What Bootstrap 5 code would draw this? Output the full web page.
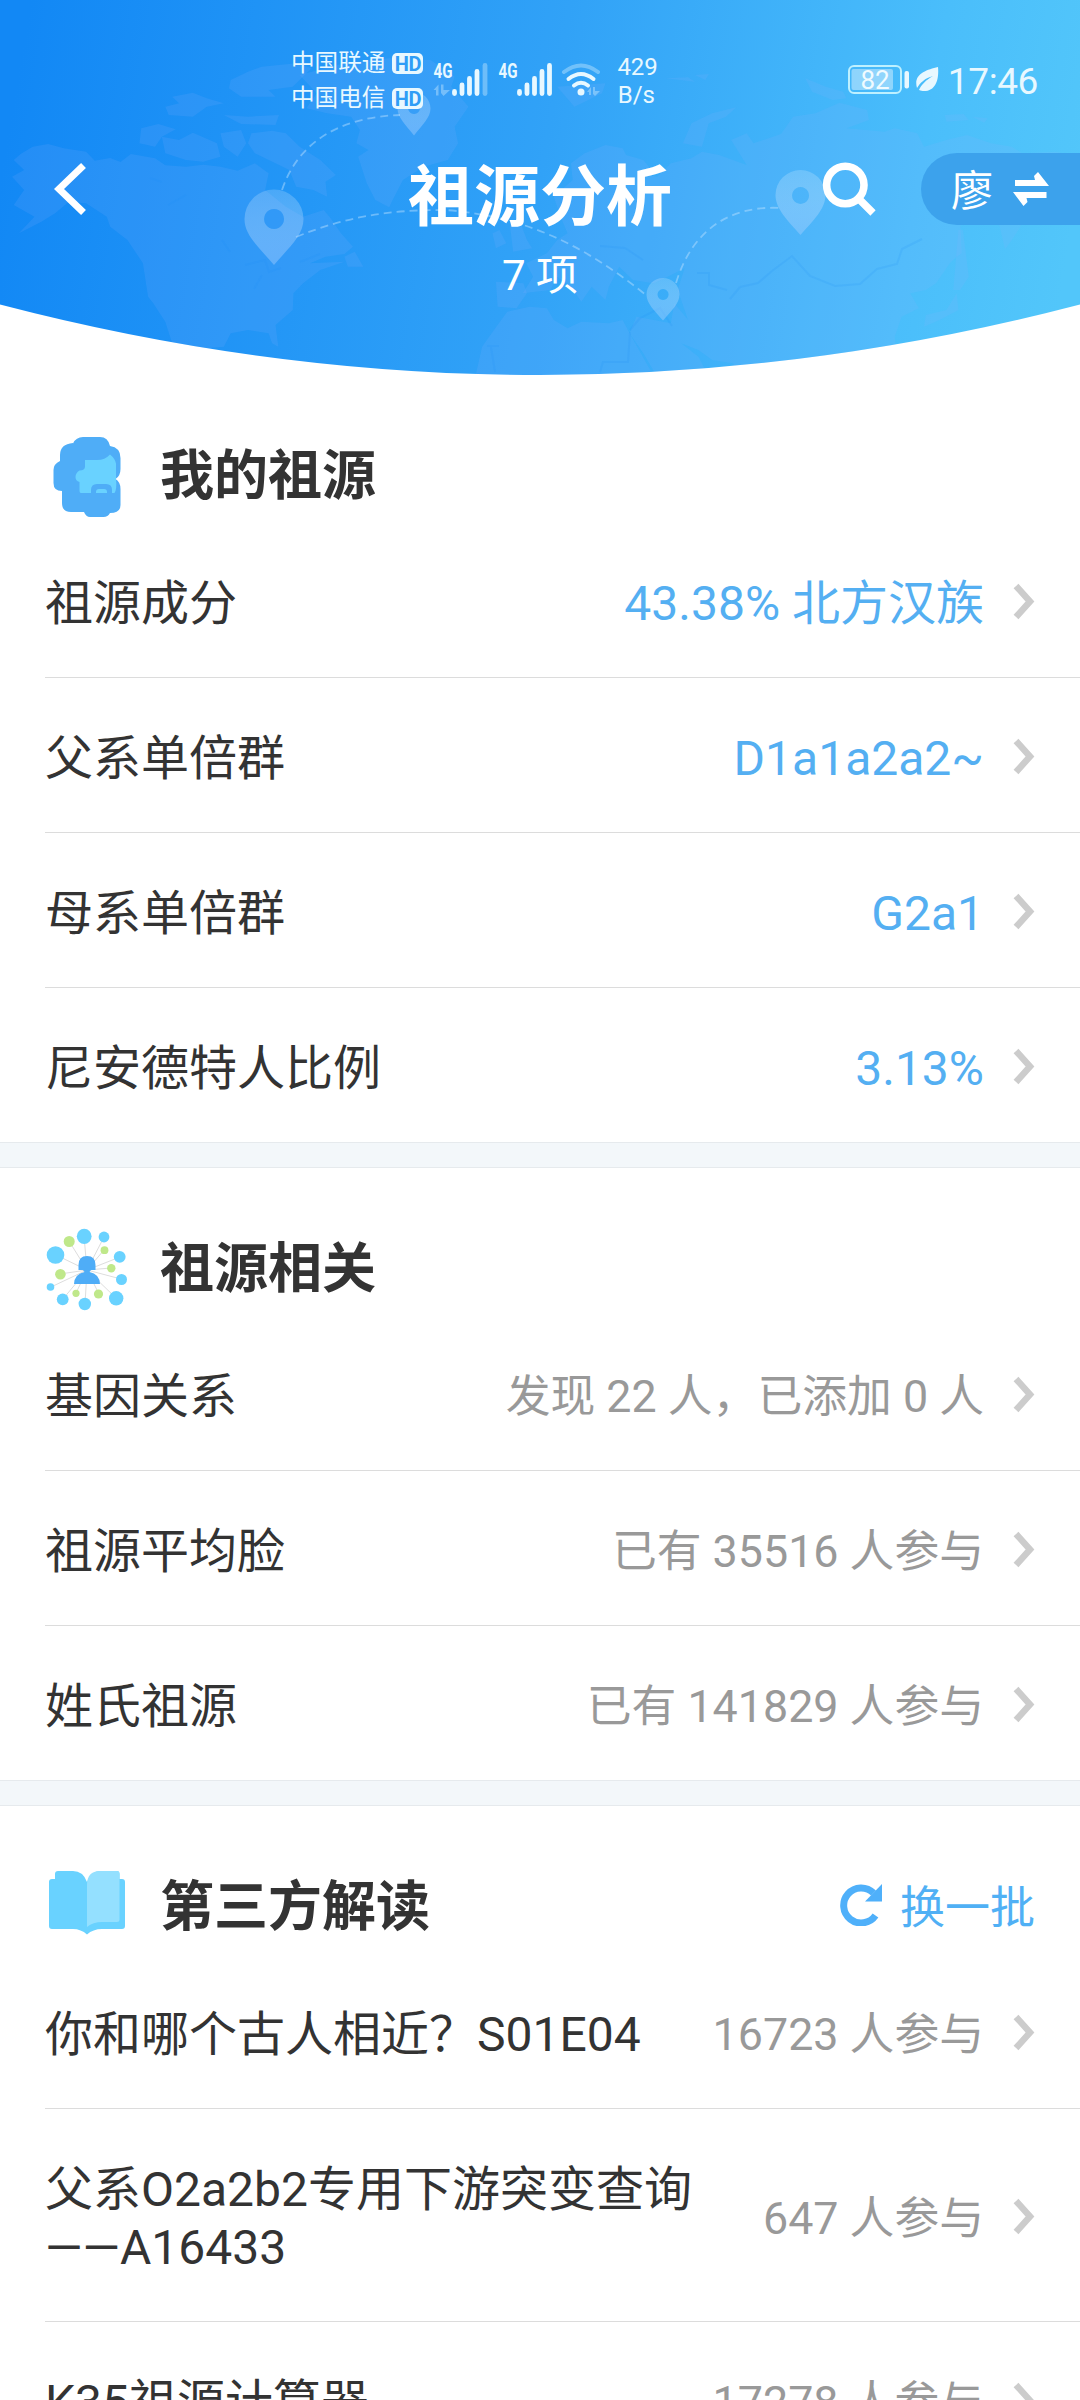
<!DOCTYPE html>
<html lang="zh-CN">
<head>
<meta charset="utf-8">
<meta name="viewport" content="width=device-width, initial-scale=1">
<title>祖源分析</title>
<link href="https://cdn.jsdelivr.net/npm/bootstrap@5.3.0/dist/css/bootstrap.min.css" rel="stylesheet">
<style>
  body { font-family: Roboto, "Noto Sans CJK SC", sans-serif; color: #333; background: #fff; width: 1080px; height: 2400px; overflow: hidden; }
  svg { display: block; flex-shrink: 0; }
  .hero { height: 375px; color: #fff; }
  .hero-art { z-index: 0; }
  .hero-body { z-index: 1; }
  .status-bar { height: 153px; padding: 5px 42px 0 291px; color: #e8f8ff; }
  .carrier { font-size: 23.6px; line-height: 35px; padding-top: 4px; }
  .hd-tag { width: 31px; height: 21px; border-radius: 5px; background: #e8f8ff; color: #2f9df6; font-size: 20px; font-weight: 700; line-height: 22px; text-align: center; letter-spacing: -.5px; margin-left: 7px; }
  .speed { font-size: 24px; line-height: 28px; width: 38px; margin-left: 17px; padding-top: 3px; }
  .clock { font-size: 37px; line-height: 40px; margin-left: 9px; padding-top: 5px; letter-spacing: -.4px; }
  .title-bar { display: grid; grid-template-columns: 1fr auto 1fr; grid-template-rows: 72px; height: 72px; }
  .page-title { font-size: 66px; font-weight: 700; line-height: 72px; margin: 0; padding-top: 9px; }
  .back-btn { padding-left: 54px; }
  .swap-pill { width: 159px; height: 72px; border-radius: 36px 0 0 36px; background: #3ca2ec; font-size: 42px; margin-left: 45px; padding: 0 31px 0 30px; }
  .pill-name { padding-top: 5px; }
  .subtitle { font-size: 42px; line-height: 50px; margin-top: 26px; }
  .sec-head { height: 148px; padding: 59px 45px 0; }
  .sec-icon { width: 84px; height: 84px; }
  .sec-title { font-size: 54px; font-weight: 700; line-height: 78px; margin: 0 0 0 31px; padding-top: 4px; }
  .refresh { font-size: 45px; line-height: 84px; color: #50b0f5; gap: 18px; }
  .refresh-label { padding-top: 2px; }
  .item { margin-left: 45px; padding: 47px 44px 44px 0; min-height: 155px; border-bottom: 1px solid #dcdcdc; }
  .item-name { font-size: 48px; line-height: 58px; max-width: 660px; padding-top: 5px; }
  .item-value { font-size: 44.8px; line-height: 58px; color: #999; margin-right: 28px; padding-top: 5px; }
  .item-value.strong-value { font-size: 48px; color: #54aff2; }
  .divider-band { height: 26px; background: #f3f7fa; border-top: 1px solid #e6eaed; border-bottom: 1px solid #e6eaed; }
  .section-list .item:last-child { min-height: 154px; border-bottom: 0; }
</style>
</head>
<body>
<svg width="0" height="0" class="position-absolute" aria-hidden="true">
  <defs>
    <symbol id="chev" viewBox="0 0 24 40"><path d="M4 4 18 19.500 4 35" fill="none" stroke="#ccc" stroke-width="6.500"/></symbol>
  </defs>
</svg>

<header class="hero position-relative">
  <svg class="hero-art position-absolute top-0 start-0" width="1080" height="380" viewBox="0 0 1080 380" aria-hidden="true">
    <defs>
      <linearGradient id="sky" gradientUnits="userSpaceOnUse" x1="10" y1="120" x2="1060" y2="300">
        <stop offset="0" stop-color="#1288f5"/><stop offset=".5" stop-color="#31a2f7"/><stop offset=".85" stop-color="#4abefb"/><stop offset="1" stop-color="#52c6fa"/>
      </linearGradient>
      <linearGradient id="pinfill" x1="0" y1="0" x2="0" y2="1">
        <stop offset="0" stop-color="#fff" stop-opacity=".18"/><stop offset="1" stop-color="#a5ceff" stop-opacity=".42"/>
      </linearGradient>
      <clipPath id="bowl"><path d="M0 0H1080V304.500Q540 445.500 0 304.500Z"/></clipPath>
    </defs>
    <g clip-path="url(#bowl)">
      <rect width="1080" height="380" fill="url(#sky)"/>
      <g fill="#8fb4ff" fill-opacity=".14">
        <g transform="scale(.3444 .3333)">
          <path d="M40 480 60 462 95 440 140 432 185 445 250 455 275 482 320 474 350 486 380 462 450 475 480 496 540 500 590 494 640 500 690 512 740 490 780 520 770 570 830 620 880 650 940 630 960 655 990 700 1025 740 1000 762 945 770 900 790 1000 785 930 810 880 850 852 880 850 930 800 975 808 1040 790 1030 780 1000 720 990 670 1000 650 1040 600 1045 540 1080 500 1030 480 965 445 910 430 890 415 790 370 720 320 680 310 650 250 610 200 605 160 640 120 665 55 700 100 650 40 615 70 570 35 530 70 510Z"/>
          <path d="M670 240 720 215 760 200 860 190 905 205 850 260 780 270 800 290 700 290 665 265Z"/>
          <path d="M480 320 520 310 500 290 560 278 600 295 650 310 600 320 560 350 490 345Z"/>
          <path d="M410 385 460 372 510 388 470 410 450 440 405 430Z"/>
          <path d="M470 410 520 420 560 398 630 430 640 470 590 485 540 480 480 460Z"/>
          <path d="M730 400 790 392 830 400 870 440 930 480 975 525 945 545 950 590 910 570 860 560 840 510 800 490 740 460 720 430Z"/>
          <path d="M650 345 720 350 810 345 800 375 700 372ZM640 400 700 390 715 430 690 470 650 440Z"/>
          <path d="M870 225 1000 190 1130 175 1250 180 1320 230 1310 260 1360 320 1320 380 1330 430 1300 480 1230 500 1170 540 1140 600 1130 622 1090 600 1065 550 1040 470 1070 450 1035 430 1045 390 1020 350 950 340 890 325 920 280Z"/>
          <path d="M1000 770 1030 755 1055 800 1010 800Z"/>
          <path d="M1430 700 1450 690 1470 730 1440 745ZM1480 670 1510 665 1530 720 1545 745 1490 755Z"/>
          <path d="M1440 845 1520 850 1530 880 1500 925 1445 920Z"/>
        </g>
        <g transform="translate(540 0) scale(.3444 .3333)">
          <path d="M-190 1140 -168 1040 -130 985 -95 935 -30 920 20 925 40 960 80 985 120 965 200 970 240 960 260 1000 320 1110 340 1150Z"/>
          <path d="M-50 880 -20 830 -40 790 20 760 50 720 80 700 60 650 40 590 95 540 90 490 130 460 190 435 240 445 250 465 300 480 320 505 290 520 340 530 380 490 440 475 470 455 520 465 560 480 600 495 555 420 600 400 620 430 700 402 735 350 800 340 870 308 950 330 955 360 890 385 1000 395 1030 385 1095 400 1115 440 1180 420 1240 405 1310 430 1370 440 1400 460 1500 455 1560 470 1560 560 1400 660 1395 680 1370 720 1350 748 1335 680 1300 620 1220 660 1225 760 1210 770 1190 790 1150 850 1120 870 1075 880 1100 925 1050 950 1030 1010 1035 1060 900 1060 860 1090 640 1140 600 1140 560 1090 500 1080 460 1050 410 1030 460 1070 480 1110 340 1130 300 1060 260 1000 280 950 380 970 390 910 430 960 400 870 420 805 370 830 330 850 270 840 230 800 200 860 190 900 150 860 120 905 90 860 50 830 30 870Z"/>
          <path d="M415 430 440 370 500 340 570 322 540 350 490 370 470 440ZM770 235 830 260 880 275 890 295 850 300 790 275ZM1175 345 1230 342 1245 360 1180 365ZM1255 350 1300 355 1290 368ZM365 235 430 232 450 245ZM450 225 490 222 480 240ZM1215 690 1228 690 1245 830 1220 870 1200 870ZM1210 880 1215 930 1160 960 1115 980 1120 945 1180 930ZM50 260 190 250 180 280 100 320Z"/>
        </g>
      </g>
      <g fill="none" stroke="#1f8ff5" stroke-opacity=".14" stroke-width="2">
        <path d="M150 178l12 4M168 205l18-10M222 240l8 12M245 265l20-5 4 12 12-4M262 275l-8 14M300 262l20-8"/>
        <path d="M740 287l18-4 14-12 20-15 18 20 25 10 25-2 17-15 20-5 5-15 20-10M697 273h12v12l18 5M740 287l-10 12M600 246l25 2 18 12M600 372l3-10h25l2-30M495 372l-4-25M487 346h12M630 330l10-12 20-10 12 18"/>
      </g>
      <g fill="none" stroke="#bfe3ff" stroke-opacity=".45" stroke-width="1.800" stroke-dasharray="8 5">
        <path d="M282 190C298 142 340 117 400 115"/>
        <path d="M296 237C355 213 400 210 445 210 530 216 590 250 646 295"/>
        <path d="M676 283C692 230 730 205 781 208"/>
      </g>
      <g fill="url(#pinfill)" fill-rule="evenodd">
        <path d="M274 189.500a29.500 29.500 0 0 1 29.500 29.500c0 16-14 28-29.500 46-15.500-18-29.500-30-29.500-46a29.500 29.500 0 0 1 29.500-29.500ZM274 209a10 10 0 1 0 .1 0Z"/>
        <path d="M414 92a16.500 16.500 0 0 1 16.500 16.500c0 9-8 16-16.500 27-8.500-11-16.500-18-16.500-27a16.500 16.500 0 0 1 16.500-16.500ZM414 102a6 6 0 1 0 .1 0Z"/>
        <path d="M800.500 170a25 25 0 0 1 25 25c0 14-12 25-25 40-13-15-25-26-25-40a25 25 0 0 1 25-25ZM800.500 187a8.500 8.500 0 1 0 .1 0Z"/>
        <path d="M663 278a16.500 16.500 0 0 1 16.500 16.500c0 9-8 16-16.500 26-8.500-10-16.500-17-16.500-26a16.500 16.500 0 0 1 16.500-16.500ZM663 289a5.500 5.500 0 1 0 .1 0Z"/>
      </g>
    </g>
  </svg>

  <div class="hero-body position-relative">
    <div class="status-bar d-flex align-items-center">
      <div class="carrier">
        <div class="d-flex align-items-center"><span>中国联通</span><span class="hd-tag">HD</span></div>
        <div class="d-flex align-items-center"><span>中国电信</span><span class="hd-tag">HD</span></div>
      </div>
      <svg width="120" height="36" viewBox="433 61 120 36" style="margin-left:10px" overflow="visible" fill="#e8f8ff">
        <text x="433.500" y="77.500" font-size="21" font-weight="700" textLength="19" lengthAdjust="spacingAndGlyphs">4G</text>
        <text x="498.500" y="77.500" font-size="21" font-weight="700" textLength="19" lengthAdjust="spacingAndGlyphs">4G</text>
        <path d="M433.500 90l5-5.500v11h-2.500V90ZM441 84.500h2.500V90H450l-6.500 6-2.500-3Z" opacity=".35"/>
        <g stroke="#e8f8ff" stroke-width="4.800" stroke-linecap="round">
          <path d="M454.500 91.500v2M462 85v8.500M469.500 78.500v15M477 71.500v22M519.500 91.500v2M527 85v8.500M534.500 78.500v15M542 71.500v22M549.500 65.500v28"/>
          <path d="M485 65.500v28" opacity=".35"/>
        </g>
      </svg>
      <svg width="39" height="34" viewBox="561 62 39 34" class="ms-2" fill="none" stroke="#e8f8ff" stroke-width="4" stroke-linecap="round">
        <path d="M564 72q17-13 34 0" opacity=".35"/>
        <path d="M568.500 79q12.500-10 25 0M574 85.500q7-5.500 14 0"/>
        <circle cx="581" cy="92" r="3.500" fill="#e8f8ff" stroke="none"/>
        <path d="M587 92l4-5v8h-2v-3ZM593 87h2v4h5l-5 5-2-2Z" fill="#e8f8ff" stroke="none" opacity=".35"/>
      </svg>
      <div class="speed text-center">429<br>B/s</div>
      <svg width="62" height="30" viewBox="850 64 62 30" class="ms-auto" fill="none">
        <rect x="852" y="66" width="52" height="27" rx="5" stroke="#bdf0ff" stroke-width="2"/>
        <rect x="854.500" y="69" width="41.500" height="21" rx="2" fill="#fff" fill-opacity=".4"/>
        <rect x="907.500" y="71" width="4.500" height="17.500" rx="2" fill="#e8f8ff"/>
        <text x="878" y="88.500" font-size="26" text-anchor="middle" fill="#f0fbff">82</text>
      </svg>
      <svg width="23" height="26" viewBox="919 65 23 26" style="margin-left:7px">
        <path d="M941 66c1 10-1 24-14 24-2 0-3-.2-5-1 2-5 7-10 14-14-8 2-13 7-16 12-4-14 9-18 21-21Z" fill="#e8f8ff"/>
      </svg>
      <div class="clock">17:46</div>
    </div>

    <div class="title-bar">
      <div class="back-btn d-flex align-items-center">
        <svg width="34" height="54" viewBox="54 162 34 54"><path d="M83.500 165.500 59 189 83.500 212.500" fill="none" stroke="#fff" stroke-width="7"/></svg>
      </div>
      <h1 class="page-title">祖源分析</h1>
      <div class="d-flex align-items-center justify-content-end">
        <svg width="54" height="54" viewBox="822 162 54 54" fill="none" stroke="#fff"><circle cx="845.300" cy="185" r="18.700" stroke-width="7.600"/><path d="M858.500 198.500 873 213" stroke-width="7.500"/></svg>
        <div class="swap-pill d-flex align-items-center justify-content-between">
          <span class="pill-name">廖</span>
          <svg width="36" height="34" viewBox="1013 172 36 34" fill="#fff"><path d="M1015 180h20l-1-4 4-4 11 14h-34ZM1046.500 198h-20l1 4-4 4-10.500-14h33.500Z"/></svg>
        </div>
      </div>
    </div>
    <div class="subtitle text-center">7 项</div>
  </div>
</header>

<main>
  <section>
    <div class="sec-head d-flex">
      <svg class="sec-icon" viewBox="45 434 84 84">
        <path d="M73 443.500q3-6.500 10-6.500h17q8 0 10 9 10.500 1.500 10.500 12v11q0 7-5 10 5 3 5 10v16q0 8-10.500 8-2 4-6.500 4H90q-4 0-6-5H71q-9 0-9-9v-12q-8.500 0-8.500-8v-13q0-6 6.500-9v-6q0-11 13-12Z" fill="#4fadf7"/>
        <path d="M85 460h12q8 0 13-5.500 5 4 6 9v15q1 11-1.500 14.500H81q-1.500 0-1.500-2v-9q-4-1-4-5t4-6.500q5.500 0 5.500-4Z" fill="#69d2ff"/>
        <path d="M91 494v-4q0-6 6-6h9q6 0 6 6v4Z" fill="#4fadf7"/><path d="M96 493v-1q0-3 3-3h5q3 0 3 3v1Z" fill="#69d2ff"/>
      </svg>
      <h2 class="sec-title">我的祖源</h2>
    </div>
    <div class="section-list">
      <div class="item d-flex align-items-center"><span class="item-name">祖源成分</span><span class="item-value strong-value ms-auto">43.38% 北方汉族</span><svg width="24" height="40"><use href="#chev"/></svg></div>
      <div class="item d-flex align-items-center"><span class="item-name">父系单倍群</span><span class="item-value strong-value ms-auto">D1a1a2a2~</span><svg width="24" height="40"><use href="#chev"/></svg></div>
      <div class="item d-flex align-items-center"><span class="item-name">母系单倍群</span><span class="item-value strong-value ms-auto">G2a1</span><svg width="24" height="40"><use href="#chev"/></svg></div>
      <div class="item d-flex align-items-center"><span class="item-name">尼安德特人比例</span><span class="item-value strong-value ms-auto">3.13%</span><svg width="24" height="40"><use href="#chev"/></svg></div>
    </div>
  </section>
  <div class="divider-band"></div>

  <section>
    <div class="sec-head d-flex">
      <svg class="sec-icon" viewBox="45 1227 84 84">
        <path d="M87 1270 56 1255M87 1270 60 1274M87 1270 51 1287M87 1270 63 1299M87 1270 76 1293M87 1270 85 1304M87 1270 99 1294M87 1270 116 1298M87 1270 121 1279M87 1270 111 1268M87 1270 120 1257M87 1270 104 1250M87 1270 104 1237M87 1270 84 1236M87 1270 69 1241" stroke="#ddd" stroke-width="1"/>
        <g fill="#69d2ff"><ellipse cx="84.200" cy="1236.300" rx="7.400" ry="7.600"/><circle cx="104" cy="1237" r="5.400"/><ellipse cx="55.500" cy="1255" rx="8.800" ry="8.800"/><circle cx="119.700" cy="1256.800" r="5.900"/><circle cx="121.500" cy="1279.500" r="5.500"/><circle cx="116.200" cy="1298.300" r="7.200"/><circle cx="84.800" cy="1304" r="6.200"/><circle cx="62.700" cy="1299.300" r="5.900"/><circle cx="50.500" cy="1287" r="3.800"/></g>
        <g fill="#bfe88a"><circle cx="69.200" cy="1241.500" r="5.500"/><circle cx="104.500" cy="1250.200" r="3.900"/><circle cx="111.300" cy="1268.300" r="4.200"/><circle cx="98.500" cy="1294" r="4.600"/><circle cx="76" cy="1293.300" r="3.600"/><circle cx="60.400" cy="1274.300" r="5.300"/></g>
        <path d="M78.500 1270v-5q0-9 8.500-9t8.500 9v5h-4.500l-1.500 2q10 2 10.500 12H74q.5-10 10.500-12l-1.500-2Z" fill="#4fadf7"/>
      </svg>
      <h2 class="sec-title">祖源相关</h2>
    </div>
    <div class="section-list">
      <div class="item d-flex align-items-center"><span class="item-name">基因关系</span><span class="item-value ms-auto">发现 22 人，已添加 0 人</span><svg width="24" height="40"><use href="#chev"/></svg></div>
      <div class="item d-flex align-items-center"><span class="item-name">祖源平均脸</span><span class="item-value ms-auto">已有 35516 人参与</span><svg width="24" height="40"><use href="#chev"/></svg></div>
      <div class="item d-flex align-items-center"><span class="item-name">姓氏祖源</span><span class="item-value ms-auto">已有 141829 人参与</span><svg width="24" height="40"><use href="#chev"/></svg></div>
    </div>
  </section>
  <div class="divider-band"></div>

  <section>
    <div class="sec-head d-flex">
      <svg class="sec-icon" viewBox="45 1865 84 84">
        <path d="M58 1871h15q10 0 14 11 4-11 13-11h17q2.500 0 2.500 3v5h2.500q3 0 3 3v44q0 3-3 3h-20q-9 0-15 5.500-6-5.500-14-5.500H52q-3 0-3-3v-44q0-3 3-3h3v-5q0-3 3-3Z" fill="#69d2ff"/>
        <path d="M87 1885q0-14 13-14h17q2.500 0 2.500 3v46q0 2-2.500 2h-15q-9 0-15 5Z" fill="#94e0ff"/>
      </svg>
      <h2 class="sec-title">第三方解读</h2>
      <div class="refresh d-flex ms-auto">
        <svg width="42" height="42" viewBox="840 1884 42 42" style="margin-top:19px"><path d="M875.500 1915.500A17.500 17.500 0 1 1 873.500 1893" fill="none" stroke="#4fb0fa" stroke-width="7"/><path d="M882 1884v17.500h-17Z" fill="#4fb0fa"/></svg>
        <span class="refresh-label">换一批</span>
      </div>
    </div>
    <div>
      <div class="item d-flex align-items-center"><span class="item-name">你和哪个古人相近？S01E04</span><span class="item-value ms-auto">16723 人参与</span><svg width="24" height="40"><use href="#chev"/></svg></div>
      <div class="item d-flex align-items-center"><span class="item-name">父系O2a2b2专用下游突变查询<br>——A16433</span><span class="item-value ms-auto">647 人参与</span><svg width="24" height="40"><use href="#chev"/></svg></div>
      <div class="item d-flex align-items-center"><span class="item-name">K35祖源计算器</span><span class="item-value ms-auto">17278 人参与</span><svg width="24" height="40"><use href="#chev"/></svg></div>
    </div>
  </section>
</main>
<script src="https://cdn.jsdelivr.net/npm/bootstrap@5.3.0/dist/js/bootstrap.bundle.min.js"></script>
</body>
</html>
